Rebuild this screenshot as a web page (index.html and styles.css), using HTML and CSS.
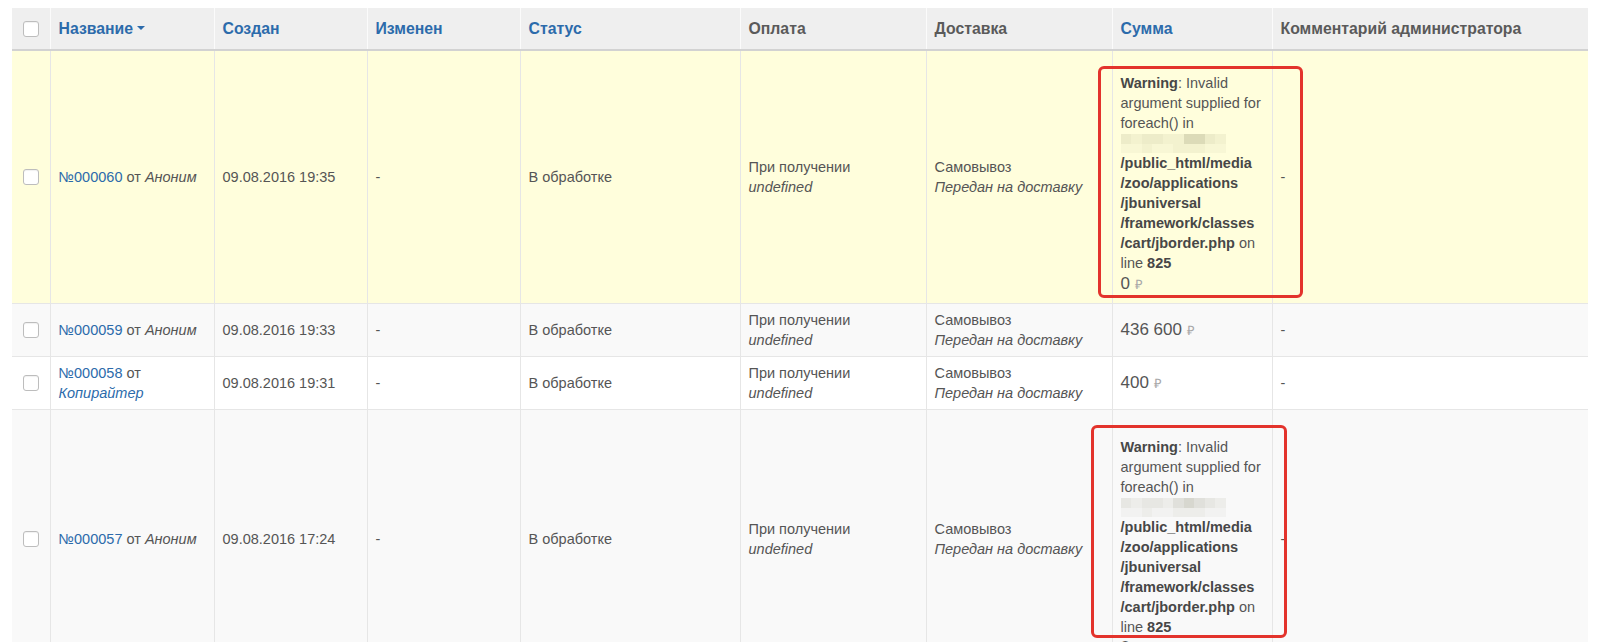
FILE: index.html
```html
<!DOCTYPE html>
<html lang="ru">
<head>
<meta charset="utf-8">
<title>Заказы</title>
<link rel="stylesheet" href="styles.css">
</head>
<body>
<table class="orders">
  <colgroup>
    <col class="w-cb"><col class="w-name"><col class="w-date"><col class="w-date"><col class="w-status"><col class="w-pay"><col class="w-pay"><col class="w-sum"><col class="w-comment">
  </colgroup>
  <thead>
    <tr>
      <th class="cb"><span class="check"></span></th>
      <th><a class="hlink" href="#">Название<span class="caret"></span></a></th>
      <th><a class="hlink" href="#">Создан</a></th>
      <th><a class="hlink" href="#">Изменен</a></th>
      <th><a class="hlink" href="#">Статус</a></th>
      <th>Оплата</th>
      <th>Доставка</th>
      <th><a class="hlink" href="#">Сумма</a></th>
      <th>Комментарий администратора</th>
    </tr>
  </thead>
  <tbody>
    <tr class="hl">
      <td class="cb"><span class="check"></span></td>
      <td><a class="link" href="#">№000060</a> от <i>Аноним</i></td>
      <td>09.08.2016 19:35</td>
      <td>-</td>
      <td>В обработке</td>
      <td>При получении<br><i>undefined</i></td>
      <td>Самовывоз<br><i>Передан на доставку</i></td>
      <td>
        <div class="warnwrap">
          <div class="mark mark-1"></div>
          <div class="warning"><b>Warning</b>: Invalid<br>argument supplied for<br>foreach() in<br><span class="blur"><span class="t2"></span><span class="t1"></span><span class="t2"></span><span class="t2"></span><span class="t1"></span><span class="t1"></span><span class="t4"></span><span class="t4"></span><span class="t2"></span><span class="t1"></span><span class="t0"></span><span class="t0"></span><span class="t1"></span><span class="t0"></span><span class="t0"></span><span class="t1"></span><span class="t1"></span><span class="t1"></span><span class="t0"></span><span class="t0"></span></span><br><b>/public_html/media<br>/zoo/applications<br>/jbuniversal<br>/framework/classes<br>/cart/jborder.php</b> on<br>line <b>825</b></div>
          <div class="price">0 <span class="rub">₽</span></div>
        </div>
      </td>
      <td>-</td>
    </tr>
    <tr class="alt">
      <td class="cb"><span class="check"></span></td>
      <td><a class="link" href="#">№000059</a> от <i>Аноним</i></td>
      <td>09.08.2016 19:33</td>
      <td>-</td>
      <td>В обработке</td>
      <td>При получении<br><i>undefined</i></td>
      <td>Самовывоз<br><i>Передан на доставку</i></td>
      <td><span class="amount">436 600 <span class="rub">₽</span></span></td>
      <td>-</td>
    </tr>
    <tr>
      <td class="cb"><span class="check"></span></td>
      <td><a class="link" href="#">№000058</a> от <a class="link" href="#"><i>Копирайтер</i></a></td>
      <td>09.08.2016 19:31</td>
      <td>-</td>
      <td>В обработке</td>
      <td>При получении<br><i>undefined</i></td>
      <td>Самовывоз<br><i>Передан на доставку</i></td>
      <td><span class="amount">400 <span class="rub">₽</span></span></td>
      <td>-</td>
    </tr>
    <tr class="alt">
      <td class="cb"><span class="check"></span></td>
      <td><a class="link" href="#">№000057</a> от <i>Аноним</i></td>
      <td>09.08.2016 17:24</td>
      <td>-</td>
      <td>В обработке</td>
      <td>При получении<br><i>undefined</i></td>
      <td>Самовывоз<br><i>Передан на доставку</i></td>
      <td>
        <div class="warnwrap warnwrap-low">
          <div class="mark mark-2"></div>
          <div class="warning"><b>Warning</b>: Invalid<br>argument supplied for<br>foreach() in<br><span class="blur"><span class="t2"></span><span class="t1"></span><span class="t2"></span><span class="t2"></span><span class="t1"></span><span class="t3"></span><span class="t4"></span><span class="t3"></span><span class="t2"></span><span class="t1"></span><span class="t0"></span><span class="t0"></span><span class="t1"></span><span class="t0"></span><span class="t0"></span><span class="t1"></span><span class="t1"></span><span class="t1"></span><span class="t0"></span><span class="t0"></span></span><br><b>/public_html/media<br>/zoo/applications<br>/jbuniversal<br>/framework/classes<br>/cart/jborder.php</b> on<br>line <b>825</b></div>
          <div class="price">0 <span class="rub">₽</span></div>
        </div>
      </td>
      <td>-</td>
    </tr>
  </tbody>
</table>
</body>
</html>
```
FILE: styles.css
```css
html, body {
  background: #fff;
}
body {
  margin: 8px 12px;
  font-family: "Liberation Sans", Arial, Helvetica, sans-serif;
  font-size: 14.5px;
  color: #555;
}
.orders {
  width: 1576px;
  border-collapse: collapse;
  table-layout: fixed;
}
.w-cb { width: 38px; }
.w-name { width: 164px; }
.w-date { width: 153px; }
.w-status { width: 220px; }
.w-pay { width: 186px; }
.w-sum { width: 160px; }
.w-comment { width: 316px; }

.orders th {
  background: #efefef;
  text-align: left;
  font-weight: bold;
  font-size: 15.8px;
  color: #5a5a5a;
  padding: 11px 8px 10px;
  line-height: 20px;
  border-bottom: 2px solid #d2d2d2;
  border-left: 1px solid #fbfbfb;
  white-space: nowrap;
}
.orders th:first-child { border-left: 0; }
.orders td {
  padding: 6px 8px;
  line-height: 20px;
  vertical-align: middle;
  border-top: 1px solid #e6e6e6;
  border-left: 1px solid #e6e6e6;
}
.orders td:first-child { border-left: 0; }
.orders td:last-child { border-right: 1px solid #e6e6e6; }
.orders th.cb, .orders td.cb {
  padding-left: 0;
  padding-right: 0;
  text-align: center;
}
.check {
  display: inline-block;
  width: 14px;
  height: 14px;
  border: 1px solid #bdbdbd;
  border-radius: 3px;
  background: #fff;
  vertical-align: middle;
  box-shadow: inset 0 1px 1px rgba(0,0,0,0.06);
  position: relative;
  top: -1px;
}
tr.hl td { background: #fffedc; }
tr.alt td { background: #f9f9f9; }

.hlink {
  color: #2c6bab;
  text-decoration: none;
}
.caret {
  display: inline-block;
  width: 0;
  height: 0;
  border-top: 4px solid #2c6bab;
  border-left: 4px solid transparent;
  border-right: 4px solid transparent;
  margin-left: 4px;
  vertical-align: middle;
  position: relative;
  top: -2px;
}
.link {
  color: #2c6bab;
  text-decoration: none;
}
i { font-style: italic; }

.warnwrap {
  position: relative;
  margin-top: 16px;
  padding-bottom: 2px;
}
.warnwrap-low {
  margin-top: 21px;
}
.warning b { color: #474747; }
.price {
  font-size: 17px;
  line-height: 21px;
  color: #555;
}
.amount {
  font-size: 17px;
  color: #555;
}
.rub {
  font-size: 13px;
  color: #a8a8a8;
}
.blur {
  display: inline-grid;
  grid-template-columns: repeat(10, 10.5px);
  grid-template-rows: 10px 9px;
  vertical-align: middle;
  margin-top: -2px;
}
.blur .t0 { background: rgba(80,80,40,0.04); }
.blur .t1 { background: rgba(80,80,40,0.07); }
.blur .t2 { background: rgba(80,80,40,0.10); }
.blur .t3 { background: rgba(80,80,40,0.14); }
.blur .t4 { background: rgba(80,80,40,0.20); }

.mark {
  position: absolute;
  border: 3px solid #e3332c;
  border-radius: 6px;
  box-sizing: border-box;
  pointer-events: none;
}
.mark-1 {
  left: -23px;
  top: -7px;
  width: 205px;
  height: 232px;
}
.mark-2 {
  left: -30px;
  top: -12px;
  width: 196px;
  height: 213px;
}
```
